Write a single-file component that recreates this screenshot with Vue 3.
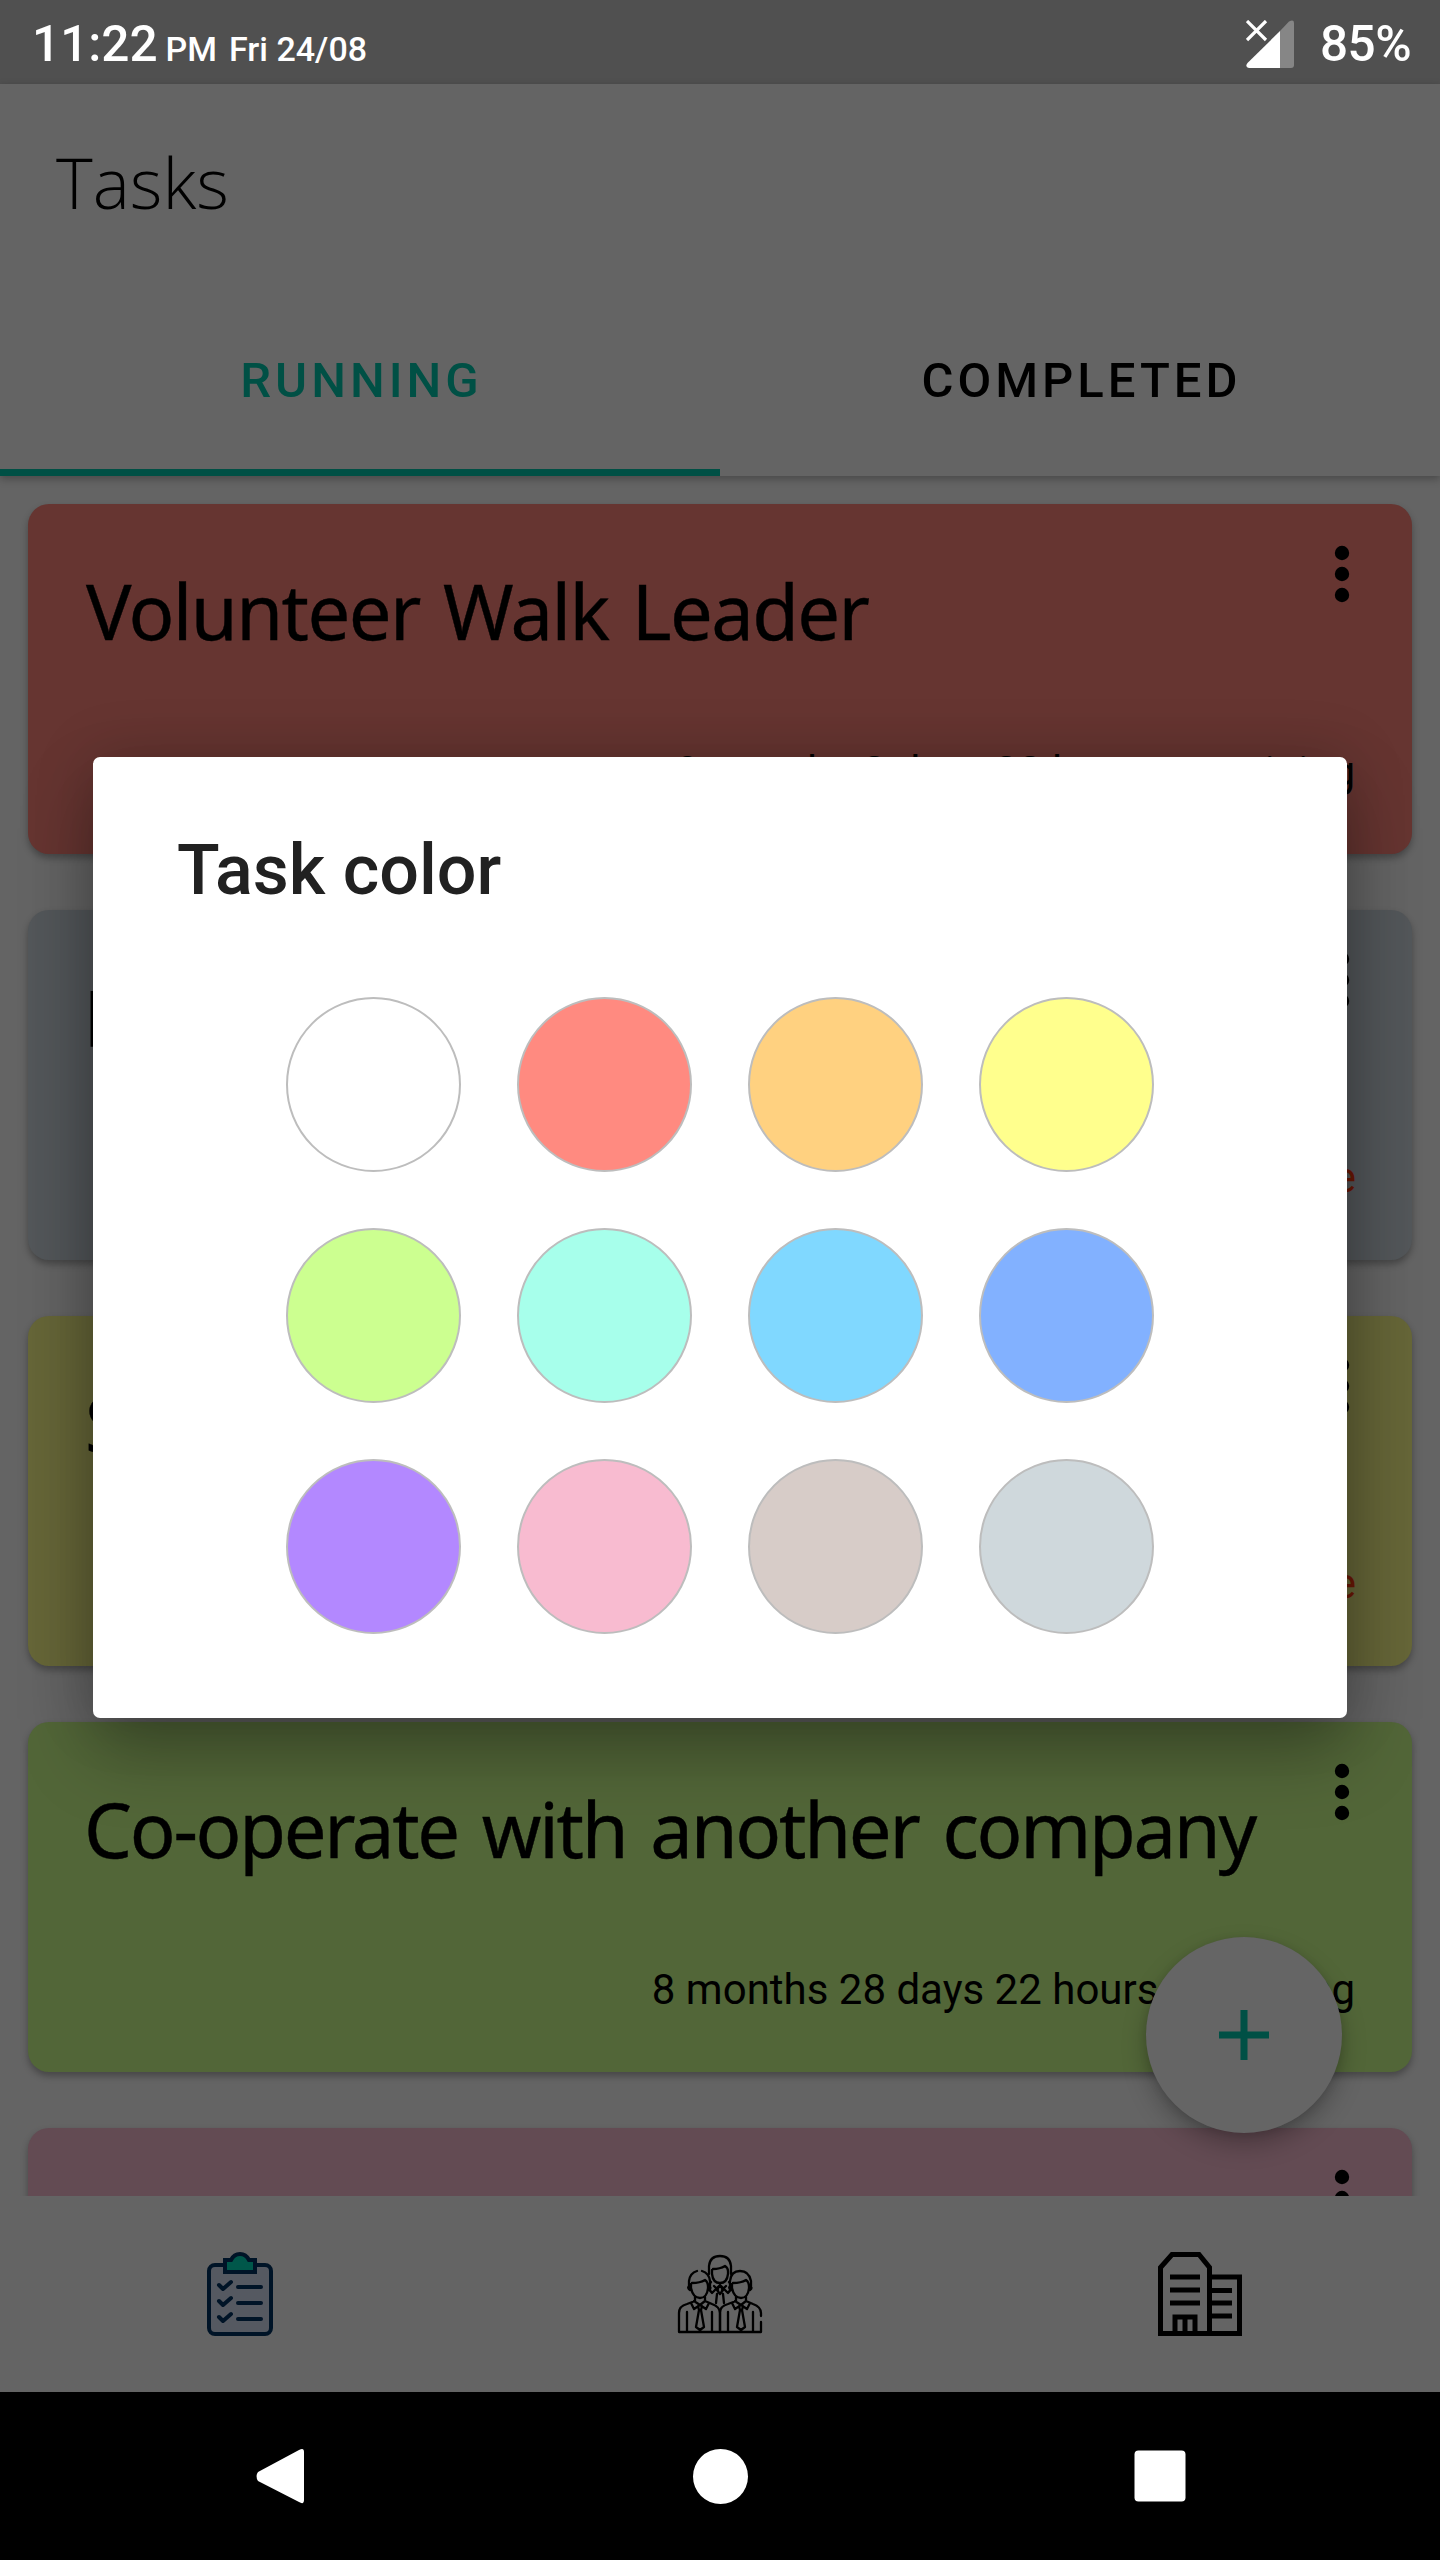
<script setup>
const tasks = [
  { title: 'Volunteer Walk Leader', due: '8 months 2 days 22 hours remaining', color: '#663531', shift: 1, spacing: -1.6, gap: 5 },
  { title: 'Plan the next meeting', due: 'Overdue', late: true, color: '#53575a', shift: -1.5, spacing: -1.6, gap: 5 },
  { title: 'Schedule interviews', due: 'Overdue', late: true, color: '#666638', shift: 0, spacing: -1.6, gap: 5 },
  { title: 'Co-operate with another company', due: '8 months 28 days 22 hours remaining', color: '#526638', shift: -1, spacing: -2.3, gap: 6.5 },
  { title: '', due: '', color: '#634b53', shift: 0, spacing: 0, gap: 0 },
]
const colors = [
  '#ffffff', '#ff8a80', '#ffd180', '#ffff8d',
  '#ccff90', '#a7ffeb', '#80d8ff', '#82b1ff',
  '#b388ff', '#f8bbd0', '#d7ccc8', '#cfd8dc',
]
</script>

<template>
  <div class="screen">
    <header class="status">
      <div class="clock"><span class="time">11:22</span><span class="small pm">PM</span><span class="small date">Fri 24/08</span></div>
      <div class="battery">
        <svg width="48" height="48" viewBox="0 0 48 48">
          <path d="M34 11 43 1.5Q48-1 48 3V45Q48 48 45 48H34Z" fill="#868686" />
          <path d="M34 11V48H3Q-1.500 47 1.500 43Z" fill="#fff" />
          <path d="M1 1 20 20M20 1 1 20" stroke="#fff" stroke-width="3.200" />
        </svg>
        <span class="percent">85%</span>
      </div>
    </header>

    <section class="appbar">
      <h1>Tasks</h1>
      <nav class="tabs">
        <div class="tab active"><span>RUNNING</span></div>
        <div class="tab"><span>COMPLETED</span></div>
      </nav>
    </section>

    <main class="list">
      <article v-for="(t, i) in tasks" :key="i" class="card" :style="{ background: t.color }">
        <h2 :style="{ marginLeft: t.shift + 'px', letterSpacing: t.spacing + 'px', wordSpacing: t.gap + 'px' }">{{ t.title }}</h2>
        <svg class="more" width="16" height="58" viewBox="0 0 16 58">
          <circle cx="8" cy="8" r="7.200" /><circle cx="8" cy="29" r="7.200" /><circle cx="8" cy="50" r="7.200" />
        </svg>
        <p :class="{ late: t.late }">{{ t.due }}</p>
      </article>
    </main>

    <button class="fab" aria-label="Add">
      <svg width="50" height="50" viewBox="0 0 50 50"><path d="M25 0V50M0 25H50" stroke="#005045" stroke-width="7" /></svg>
    </button>

    <nav class="bottom">
      <div>
        <svg width="120" height="120" viewBox="0 0 120 120" fill="none" stroke="#001427" stroke-width="4" stroke-linecap="round" stroke-linejoin="round">
          <rect x="29" y="35" width="62" height="69" rx="6" fill="#555961" />
          <path d="M45 30H51Q54 24 60 24T69 30H75V42H45Z" fill="#00574a" stroke-linejoin="miter" />
          <path d="M39 55 43 59 51 52M39 71 43 75 51 68M39 87 43 91 51 84M58 57H81M58 73H81M58 89H81" />
        </svg>
      </div>
      <div>
        <svg width="120" height="120" viewBox="0 0 120 120" fill="none" stroke="#000" stroke-width="2.300" stroke-linecap="round" stroke-linejoin="round">
          <path d="M49 40V36Q50 26 60 26T71 36V40M53 39Q60 39 65 36Q68 38 68 41V44Q67 53 60 53T52 44V40M49 37V44M71 37V44" />
          <path d="M51 52Q46 57 52 63L60 55 68 63Q74 57 69 52M60 55 57 60 60 64 63 60ZM57 64 56 73M63 64 64 73M54 56 58 60M66 56 62 60" />
          <path d="M29 58V51Q30 43 37 41M42 41Q49 43 50 51V58M32 53Q40 53 45 50Q48 52 48 57V58Q47 68 40 68T31 58V54M29 56Q27 58 30 60M49 56Q52 58 49 60" />
          <path d="M35 67V71L27 74Q19 76 19 83V102H60V83Q60 77 52 74L45 71V67M34 71 40 75 34 79 31 73M45 71 40 75 46 79 49 73M38 76 39 80 36 97 40 100 44 97 41 80 42 76M27 82V102M52 82V102" />
          <path d="M70 58V51Q71 41 80 41T91 51V58M73 53Q81 53 86 50Q89 52 89 57V58Q88 68 81 68T72 58V54M70 56Q68 58 71 60M90 56Q93 58 90 60" />
          <path d="M76 67V71L68 74Q60 76 60 83V102H101V92M101 86V83Q101 77 93 74L86 71V67M75 71 81 75 75 79 72 73M86 71 81 75 87 79 90 73M79 76 80 80 77 97 81 100 85 97 82 80 83 76M68 82V102M93 82V102" />
        </svg>
      </div>
      <div>
        <svg width="120" height="120" viewBox="0 0 120 120" fill="none" stroke="#000" stroke-width="5">
          <path d="M20.500 103.500V37.500L32 24.500H59L69.500 37.500V103.500ZM69.500 47H99.500V103.500H69.500" />
          <path d="M30 47H60M30 60H60M30 73H60M72 60.500H92M72 73H92M72 86H92M35 102V87H55V102M45 87V102" />
        </svg>
      </div>
    </nav>

    <footer class="system">
      <svg width="1440" height="168" viewBox="0 0 1440 168">
        <path d="M258 80 299 58Q304 55 304 60V108Q304 113 299 110L258 89Q255 84 258 80Z" fill="#fff" />
        <circle cx="720.500" cy="84.500" r="27.500" fill="#fff" />
        <rect x="1134.500" y="58.500" width="51" height="51" rx="4" fill="#fff" />
      </svg>
    </footer>

    <div class="dialog">
      <h3>Task color</h3>
      <div class="palette">
        <span v-for="c in colors" :key="c" class="swatch" :style="{ background: c }"></span>
      </div>
    </div>
  </div>
</template>

<style>
body { margin: 0; background: #646464; }
</style>

<style scoped>
* { box-sizing: border-box; }
.screen { position: relative; width: 1440px; height: 2560px; overflow: hidden; background: #646464; font-family: Roboto, sans-serif; display: flex; flex-direction: column; }
h1, h2, h3, p { margin: 0; font-weight: 400; }
.status { height: 84px; flex: none; background: #505050; color: #fff; font-weight: 500; display: flex; justify-content: space-between; padding: 0 29px 0 32px; }
.clock { display: flex; align-items: baseline; line-height: 88px; }
.time { font-size: 49.500px; }
.small { font-size: 34px; }
.pm { margin-left: 8px; }
.date { margin-left: 12px; }
.battery { display: flex; gap: 26px; padding-top: 19.500px; }
.percent { font-size: 49.500px; line-height: 48px; letter-spacing: -.6px; }
.appbar { height: 392px; flex: none; position: relative; z-index: 1; background: #646464; box-shadow: 0 3px 8px rgba(0,0,0,.28); display: flex; flex-direction: column; justify-content: space-between; }
h1 { font: 300 70px/96px "Open Sans", sans-serif; padding: 50px 0 0 56px; color: #000; }
.tabs { display: flex; height: 196px; }
.tab { flex: 1; display: flex; align-items: center; justify-content: center; font-size: 49px; font-weight: 500; letter-spacing: 4px; color: #000; border-bottom: 7px solid transparent; padding: 11px 0 0 3px; }
.active { color: #005045; border-color: #005045; }
.list { flex: none; height: 1720px; overflow: hidden; padding: 28px 28px 0; display: flex; flex-direction: column; gap: 56px; }
.card { height: 350px; flex: none; border-radius: 21px; box-shadow: 0 4px 7px rgba(0,0,0,.3); display: grid; grid-template-columns: 1fr auto; grid-template-rows: 1fr auto; padding: 41px 62px 40px 57px; color: #000; }
h2 { font-family: "Noto Sans", sans-serif; font-size: 76px; line-height: 132px; white-space: nowrap; width: 1100px; -webkit-text-stroke: .4px #000; }
.more { margin: 0; }
.card p { grid-column: 1 / 3; text-align: right; font-size: 42px; line-height: 84px; margin-right: -5px; }
.card p.late { color: #6b1705; margin-right: -6px; }
.fab { position: absolute; left: 1146px; top: 1937px; width: 196px; height: 196px; border: 0; border-radius: 50%; background: #656565; display: flex; align-items: center; justify-content: center; box-shadow: 0 12px 24px rgba(0,0,0,.25), 0 2px 8px rgba(0,0,0,.12); }
.bottom { height: 196px; flex: none; display: flex; background: #646464; }
.bottom div { flex: 1; display: flex; justify-content: center; padding-top: 34px; }
.system { height: 168px; flex: none; background: #000; }
.dialog { position: absolute; left: 93px; top: 757px; width: 1254px; height: 961px; border-radius: 7px; background: #fff; box-shadow: 0 36px 72px rgba(0,0,0,.28), 0 0 60px rgba(0,0,0,.18); padding: 71px 193px 0; }
h3 { font-size: 70px; font-weight: 500; line-height: 84px; color: #212121; margin-left: -109px; }
.palette { margin-top: 85px; display: grid; grid-template-columns: repeat(4, 175px); gap: 56px; }
.swatch { height: 175px; border: 2px solid #bdbdbd; border-radius: 50%; }
</style>
